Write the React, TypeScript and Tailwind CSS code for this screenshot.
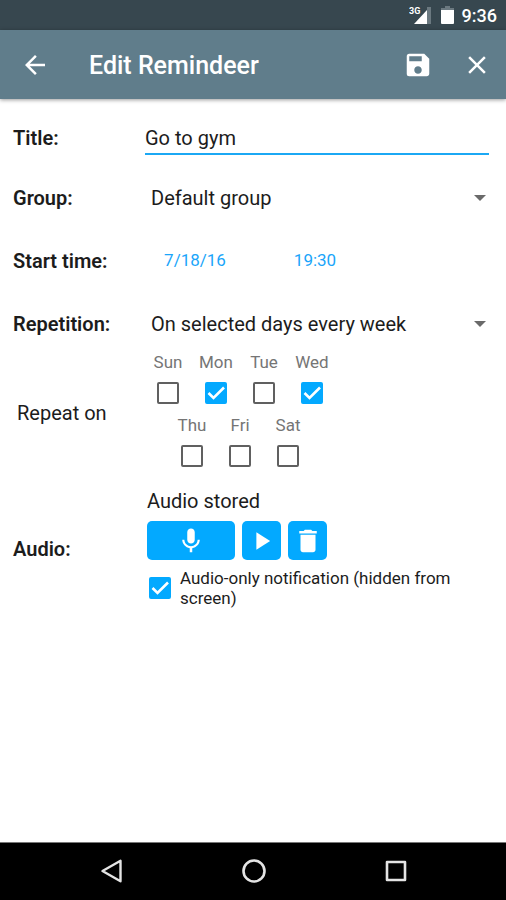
import { useState, type ReactNode } from "react";

const groups = ["Default group", "Work", "Family"];
const repetitions = ["On selected days every week", "Once", "Every day", "Every month"];
const dayRows = [
  ["Sun", "Mon", "Tue", "Wed"],
  ["Thu", "Fri", "Sat"],
];

function StatusBar() {
  return (
    <div className="flex h-[30px] shrink-0 items-center justify-end bg-[#37474f] pr-[9px] text-white">
      <svg width="23" height="20" viewBox="0 0 23 20" aria-label="3G signal" className="mr-[9px]">
        <path d="M18 2h4v17h-4z" fill="#6b7980" />
        <path d="M18 5v14H5z" fill="#fff" />
        <text x="0" y="9" fontSize="9" fontWeight="700" fontFamily="Roboto, sans-serif" fill="#fff">
          3G
        </text>
      </svg>
      <svg width="13" height="20" viewBox="0 0 13 20" aria-label="Battery" className="mr-2">
        <path d="M4 1h5v2h4v3H0V3h4z" fill="#6b7980" />
        <path d="M0 5h13v13a1 1 0 0 1-1 1H1a1 1 0 0 1-1-1z" fill="#fff" />
      </svg>
      <span className="pt-px text-[18px] leading-none font-medium">9:36</span>
    </div>
  );
}

function AppBar() {
  return (
    <header className="z-10 flex h-[69px] shrink-0 items-center bg-[#607d8b] pr-[14px] pl-5 text-white shadow-[0_1px_4px_rgba(0,0,0,0.4)]">
      <button type="button" aria-label="Back" className="cursor-pointer">
        <svg width="30" height="30" viewBox="0 0 24 24" fill="currentColor">
          <path d="M20 11H7.83l5.59-5.59L12 4l-8 8 8 8 1.41-1.41L7.83 13H20v-2z" />
        </svg>
      </button>
      <h1 className="ml-[39px] flex-1 pt-[2px] text-[25px] leading-none font-medium">Edit Remindeer</h1>
      <button type="button" aria-label="Save" className="mr-[29px] cursor-pointer">
        <svg width="30" height="30" viewBox="0 0 24 24" fill="currentColor">
          <path d="M17 3H5a2 2 0 0 0-2 2v14a2 2 0 0 0 2 2h14c1.1 0 2-.9 2-2V7l-4-4zm-5 16c-1.66 0-3-1.34-3-3s1.34-3 3-3 3 1.34 3 3-1.34 3-3 3zm3-10H5V5h10v4z" />
        </svg>
      </button>
      <button type="button" aria-label="Close" className="cursor-pointer">
        <svg width="30" height="30" viewBox="0 0 24 24" fill="currentColor">
          <path d="M19 6.41 17.59 5 12 10.59 6.41 5 5 6.41 10.59 12 5 17.59 6.41 19 12 13.41 17.59 19 19 17.59 13.41 12z" />
        </svg>
      </button>
    </header>
  );
}

function Row({ label, htmlFor, height, children }: { label: string; htmlFor?: string; height: string; children: ReactNode }) {
  return (
    <div className={`flex items-center ${height}`}>
      <label htmlFor={htmlFor} className="w-[132px] shrink-0 text-[20px] font-semibold">
        {label}
      </label>
      <div className="min-w-0 flex-1">{children}</div>
    </div>
  );
}

function Dropdown({ id, options }: { id: string; options: string[] }) {
  return (
    <div className="relative">
      <select id={id} className="h-10 w-full cursor-pointer appearance-none bg-transparent pr-8 pl-[6px] text-[20px]">
        {options.map((option) => (
          <option key={option}>{option}</option>
        ))}
      </select>
      <svg width="12" height="6" viewBox="0 0 12 6" className="pointer-events-none absolute top-[17px] right-[3px] fill-[#6a6a6a]">
        <path d="M0 0h12L6 6z" />
      </svg>
    </div>
  );
}

function Checkbox({ id, checked, onChange }: { id: string; checked: boolean; onChange: () => void }) {
  return (
    <span className="grid size-[22px] shrink-0">
      <input
        id={id}
        type="checkbox"
        checked={checked}
        onChange={onChange}
        className="col-start-1 row-start-1 size-[22px] cursor-pointer appearance-none rounded-[2px] border-2 border-[#606060] checked:border-[#03a9ff] checked:bg-[#03a9ff]"
      />
      {checked && (
        <svg viewBox="0 0 22 22" className="pointer-events-none col-start-1 row-start-1 size-[22px]">
          <path d="M3.5 11 8.5 16 19 5.5" fill="none" stroke="#fff" strokeWidth="2.6" />
        </svg>
      )}
    </span>
  );
}

function NavBar() {
  return (
    <nav className="flex h-[58px] shrink-0 items-center justify-center gap-[118px] border-t border-[#777] bg-black pb-[2px] pl-[2px] text-[#e4e4e4]">
      <button type="button" aria-label="Back" className="cursor-pointer">
        <svg width="24" height="26" viewBox="0 0 24 26" fill="none" stroke="currentColor" strokeWidth="2.4" strokeLinejoin="round">
          <path d="M20.5 2.8v20.4L2.5 13z" />
        </svg>
      </button>
      <button type="button" aria-label="Home" className="cursor-pointer">
        <svg width="24" height="26" viewBox="0 0 24 26" fill="none" stroke="currentColor" strokeWidth="2.6">
          <circle cx="12" cy="13" r="10.5" />
        </svg>
      </button>
      <button type="button" aria-label="Recent apps" className="cursor-pointer">
        <svg width="24" height="26" viewBox="0 0 24 26" fill="none" stroke="currentColor" strokeWidth="2.6" strokeLinejoin="round">
          <path d="M3 4h18v18H3z" />
        </svg>
      </button>
    </nav>
  );
}

export default function App() {
  const [title, setTitle] = useState("Go to gym");
  const [days, setDays] = useState(["Mon", "Wed"]);
  const [audioOnly, setAudioOnly] = useState(true);

  const toggleDay = (day: string) => {
    setDays((prev) => (prev.includes(day) ? prev.filter((d) => d !== day) : [...prev, day]));
  };

  return (
    <div className="flex min-h-screen flex-col bg-white font-[Roboto,sans-serif] text-[#1c1c1c]">
      <StatusBar />
      <AppBar />
      <main className="flex-1 pt-[9px] pr-[17px] pl-[13px]">
        <Row label="Title:" htmlFor="title" height="h-[60px]">
          <input
            id="title"
            type="text"
            value={title}
            onChange={(e) => setTitle(e.target.value)}
            className="block h-[34px] w-full border-b-2 border-[#1ba8f4] bg-transparent pt-[2px] text-[20px] outline-none"
          />
        </Row>
        <Row label="Group:" htmlFor="group" height="h-[60px]">
          <Dropdown id="group" options={groups} />
        </Row>
        <Row label="Start time:" height="h-[66px]">
          <div className="flex gap-5 text-[17px] text-[#1aa5fa]">
            <button type="button" className="w-[100px] cursor-pointer">
              7/18/16
            </button>
            <button type="button" className="w-[100px] cursor-pointer">
              19:30
            </button>
          </div>
        </Row>
        <Row label="Repetition:" htmlFor="repetition" height="h-[60px]">
          <Dropdown id="repetition" options={repetitions} />
        </Row>

        <div className="flex items-center">
          <span className="w-[131px] shrink-0 pb-2 pl-1 text-[20px]">Repeat on</span>
          <div role="group" aria-label="Repeat on" className="w-48">
            {dayRows.map((row) => (
              <div key={row[0]} className="flex justify-center">
                {row.map((day) => (
                  <div key={day} className="flex h-[63px] w-12 flex-col items-center gap-3">
                    <label htmlFor={day} className="text-[17px] leading-4 text-[#757575]">
                      {day}
                    </label>
                    <Checkbox id={day} checked={days.includes(day)} onChange={() => toggleDay(day)} />
                  </div>
                ))}
              </div>
            ))}
          </div>
        </div>

        <div className="mt-[9px] flex items-center">
          <span className="w-[134px] shrink-0 text-[20px] font-semibold">Audio:</span>
          <div className="min-w-0 flex-1">
            <p className="text-[20px] leading-6">Audio stored</p>
            <div className="mt-2 flex gap-[7px] text-white">
              <button type="button" aria-label="Record" className="flex h-[39px] w-[88px] cursor-pointer items-center justify-center rounded-[5px] bg-[#03a9ff]">
                <svg width="30" height="30" viewBox="0 0 24 24" fill="currentColor">
                  <path d="M12 14c1.66 0 2.99-1.34 2.99-3L15 5c0-1.66-1.34-3-3-3S9 3.34 9 5v6c0 1.66 1.34 3 3 3zm5.3-3c0 3-2.54 5.1-5.3 5.1S6.7 14 6.7 11H5c0 3.41 2.72 6.23 6 6.72V21h2v-3.28c3.28-.48 6-3.3 6-6.72h-1.7z" />
                </svg>
              </button>
              <button type="button" aria-label="Play" className="flex h-[39px] w-[39px] cursor-pointer items-center justify-center rounded-[5px] bg-[#03a9ff]">
                <svg width="30" height="30" viewBox="0 0 24 24" fill="currentColor">
                  <path d="M7.5 5v14l11-7z" />
                </svg>
              </button>
              <button type="button" aria-label="Delete" className="flex h-[39px] w-[39px] cursor-pointer items-center justify-center rounded-[5px] bg-[#03a9ff]">
                <svg width="30" height="30" viewBox="0 0 24 24" fill="currentColor">
                  <path d="M6 19c0 1.1.9 2 2 2h8c1.1 0 2-.9 2-2V7H6v12zM19 4h-3.5l-1-1h-5l-1 1H5v2h14V4z" />
                </svg>
              </button>
            </div>
            <div className="mt-2 flex items-center gap-[9px] pl-[2px]">
              <Checkbox id="audio-only" checked={audioOnly} onChange={() => setAudioOnly(!audioOnly)} />
              <label htmlFor="audio-only" className="max-w-[300px] text-[17px] leading-5">
                Audio-only notification (hidden from screen)
              </label>
            </div>
          </div>
        </div>
      </main>
      <NavBar />
    </div>
  );
}
